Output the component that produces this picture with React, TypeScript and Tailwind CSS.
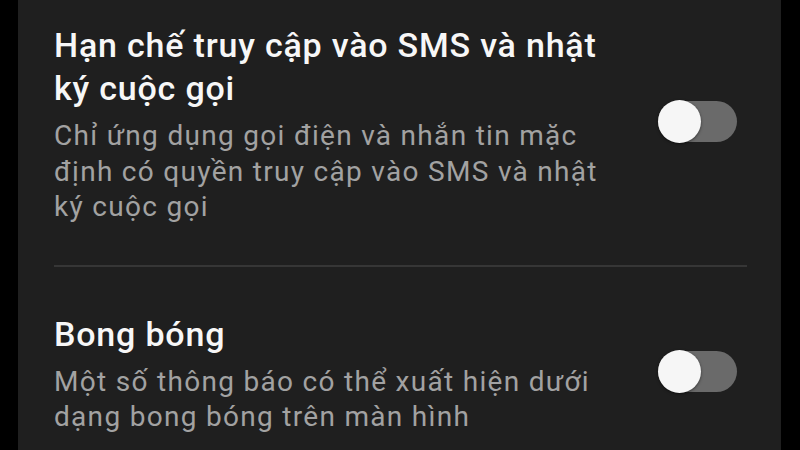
function Toggle() {
  return (
    <div className="relative mb-[5px] mr-[10px] h-[41px] w-[79px] shrink-0 rounded-full bg-[#6a6a6a]">
      <div className="absolute -top-[1px] left-0 h-[43px] w-[43px] rounded-full bg-[#f6f6f6] shadow-[0_1px_3px_rgba(0,0,0,0.5)]" />
    </div>
  );
}

function SettingRow({ title, desc }: { title: string[]; desc: string[] }) {
  return (
    <div className="flex items-center justify-between">
      <div className="flex flex-col">
        <div className="whitespace-nowrap text-[34px] font-medium leading-[43px] tracking-[0.8px] text-[#f7f7f7]">
          {title.map((t, i) => (
            <div key={i}>{t}</div>
          ))}
        </div>
        <div className="mt-[8px] whitespace-nowrap text-[28px] leading-[35.5px] tracking-[1.3px] text-[#a2a2a2]">
          {desc.map((t, i) => (
            <div key={i}>{t}</div>
          ))}
        </div>
      </div>
      <Toggle />
    </div>
  );
}

export default function App() {
  return (
    <div
      className="flex h-[450px] w-[800px] overflow-hidden bg-black"
      style={{ fontFamily: "Roboto, 'Noto Sans', sans-serif" }}
    >
      <div className="w-[18px] shrink-0 bg-black" />
      <div className="flex-1 bg-[#1f1f1f] pl-[36px] pr-[34px] pt-[24px]">
        <SettingRow
          title={["Hạn chế truy cập vào SMS và nhật", "ký cuộc gọi"]}
          desc={[
            "Chỉ ứng dụng gọi điện và nhắn tin mặc",
            "định có quyền truy cập vào SMS và nhật",
            "ký cuộc gọi",
          ]}
        />
        <div className="mb-[46px] mt-[40px] h-[2px] bg-[#363636]" />
        <SettingRow
          title={["Bong bóng"]}
          desc={["Một số thông báo có thể xuất hiện dưới", "dạng bong bóng trên màn hình"]}
        />
      </div>
      <div className="w-[19px] shrink-0 bg-black" />
    </div>
  );
}
